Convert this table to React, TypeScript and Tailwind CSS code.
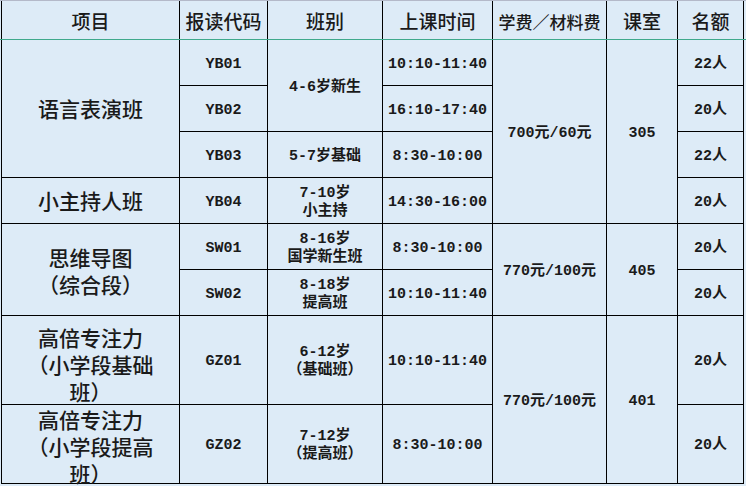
const cols = "grid grid-cols-[177px_87px_114px_109px_113px_70px_65px]";

const headers = [
  { label: "项目", size: "text-[19px]" },
  { label: "报读代码", size: "text-[19px]" },
  { label: "班别", size: "text-[19px]" },
  { label: "上课时间", size: "text-[19px]" },
  { label: "学费／材料费", size: "text-[17px]" },
  { label: "课室", size: "text-[19px]" },
  { label: "名额", size: "text-[19px]" },
];

type Cell = { pos: string; lines: string[]; big?: boolean };

const cells: Cell[] = [
  // 项目
  { pos: "col-start-1 row-start-1 row-span-3", lines: ["语言表演班"], big: true },
  { pos: "col-start-1 row-start-4", lines: ["小主持人班"], big: true },
  { pos: "col-start-1 row-start-5 row-span-2 pt-[2px]", lines: ["思维导图", "（综合段）"], big: true },
  { pos: "col-start-1 row-start-7 pt-[8px]", lines: ["高倍专注力", "（小学段基础", "班）"], big: true },
  { pos: "col-start-1 row-start-8 pt-[4px] leading-[26px]", lines: ["高倍专注力", "（小学段提高", "班）"], big: true },
  // 报读代码
  { pos: "col-start-2 row-start-1", lines: ["YB01"] },
  { pos: "col-start-2 row-start-2", lines: ["YB02"] },
  { pos: "col-start-2 row-start-3", lines: ["YB03"] },
  { pos: "col-start-2 row-start-4", lines: ["YB04"] },
  { pos: "col-start-2 row-start-5", lines: ["SW01"] },
  { pos: "col-start-2 row-start-6", lines: ["SW02"] },
  { pos: "col-start-2 row-start-7", lines: ["GZ01"] },
  { pos: "col-start-2 row-start-8", lines: ["GZ02"] },
  // 班别
  { pos: "col-start-3 row-start-1 row-span-2", lines: ["4-6岁新生"] },
  { pos: "col-start-3 row-start-3", lines: ["5-7岁基础"] },
  { pos: "col-start-3 row-start-4", lines: ["7-10岁", "小主持"] },
  { pos: "col-start-3 row-start-5", lines: ["8-16岁", "国学新生班"] },
  { pos: "col-start-3 row-start-6", lines: ["8-18岁", "提高班"] },
  { pos: "col-start-3 row-start-7", lines: ["6-12岁", "（基础班）"] },
  { pos: "col-start-3 row-start-8", lines: ["7-12岁", "（提高班）"] },
  // 上课时间
  { pos: "col-start-4 row-start-1", lines: ["10:10-11:40"] },
  { pos: "col-start-4 row-start-2", lines: ["16:10-17:40"] },
  { pos: "col-start-4 row-start-3", lines: ["8:30-10:00"] },
  { pos: "col-start-4 row-start-4", lines: ["14:30-16:00"] },
  { pos: "col-start-4 row-start-5", lines: ["8:30-10:00"] },
  { pos: "col-start-4 row-start-6", lines: ["10:10-11:40"] },
  { pos: "col-start-4 row-start-7", lines: ["10:10-11:40"] },
  { pos: "col-start-4 row-start-8", lines: ["8:30-10:00"] },
  // 学费／材料费
  { pos: "col-start-5 row-start-1 row-span-4", lines: ["700元/60元"] },
  { pos: "col-start-5 row-start-5 row-span-2", lines: ["770元/100元"] },
  { pos: "col-start-5 row-start-7 row-span-2", lines: ["770元/100元"] },
  // 课室
  { pos: "col-start-6 row-start-1 row-span-4", lines: ["305"] },
  { pos: "col-start-6 row-start-5 row-span-2", lines: ["405"] },
  { pos: "col-start-6 row-start-7 row-span-2", lines: ["401"] },
  // 名额
  { pos: "col-start-7 row-start-1", lines: ["22人"] },
  { pos: "col-start-7 row-start-2", lines: ["20人"] },
  { pos: "col-start-7 row-start-3", lines: ["22人"] },
  { pos: "col-start-7 row-start-4", lines: ["20人"] },
  { pos: "col-start-7 row-start-5", lines: ["20人"] },
  { pos: "col-start-7 row-start-6", lines: ["20人"] },
  { pos: "col-start-7 row-start-7", lines: ["20人"] },
  { pos: "col-start-7 row-start-8", lines: ["20人"] },
];

export default function App() {
  return (
    <div className="w-[746px] h-[486px] overflow-hidden bg-[#ddebf7] text-[#1a1a1a]">
      <div className="h-px bg-[#b4b9c9]" />

      {/* 表头 */}
      <div className="pl-px">
        <div className={`${cols} w-[743px] h-[38px] bg-black gap-x-px px-px`}>
          {headers.map((h) => (
            <div
              key={h.label}
              className={`flex items-center justify-center pt-[3px] bg-[#ddebf7] font-medium font-['Noto_Sans_CJK_SC',sans-serif] ${h.size}`}
            >
              {h.label}
            </div>
          ))}
        </div>
      </div>

      <div className="h-px bg-[#3fa98c]" />

      {/* 表体 */}
      <div className="pl-px">
        <div
          className={`${cols} grid-rows-[repeat(6,45px)_88px_78px] w-[743px] bg-black gap-px px-px pb-px`}
        >
          {cells.map((c, i) => (
            <div
              key={i}
              className={`${c.pos} flex flex-col items-center justify-center text-center bg-[#ddebf7] whitespace-nowrap ${
                c.big
                  ? "text-[21px] leading-[27px] font-medium font-['Noto_Sans_CJK_SC',sans-serif]"
                  : "pt-[4px] text-[15px] leading-[18px] font-bold font-['Liberation_Mono','Noto_Sans_CJK_SC',monospace]"
              }`}
            >
              {c.lines.map((l) => (
                <span key={l}>{l}</span>
              ))}
            </div>
          ))}
        </div>
      </div>
    </div>
  );
}
